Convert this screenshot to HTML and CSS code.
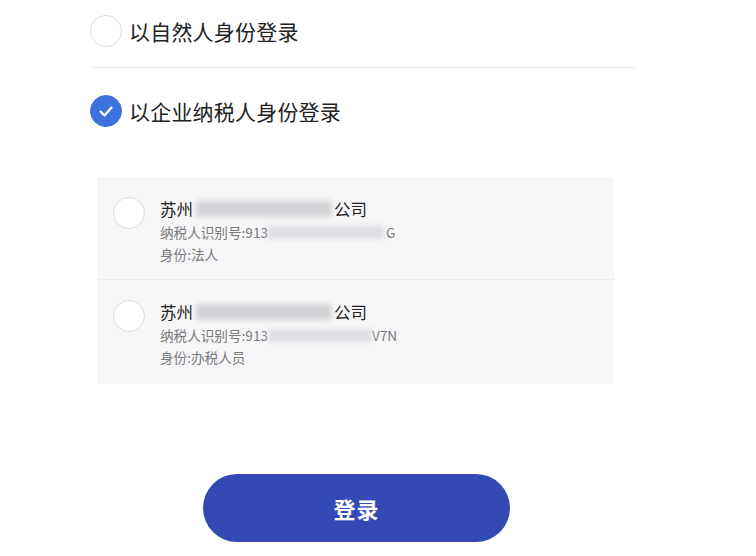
FILE: index.html
```html
<!DOCTYPE html>
<html lang="zh">
<head>
<meta charset="utf-8">
<link rel="stylesheet" href="styles.css">
</head>
<body>
<div class="page">
  <div class="option">
    <span class="radio"></span>
    <span class="option-label">以自然人身份登录</span>
  </div>
  <div class="divider"></div>
  <div class="option option-checked">
    <span class="radio radio-on">
      <svg viewBox="0 0 32 32" width="32" height="32"><path d="M10.5 16.5 L14.5 20.5 L21.5 12.5" fill="none" stroke="#fff" stroke-width="2.2" stroke-linecap="round" stroke-linejoin="round"/></svg>
    </span>
    <span class="option-label">以企业纳税人身份登录</span>
  </div>
  <div class="panel">
    <div class="item">
      <span class="radio"></span>
      <div class="info">
        <div class="name">苏州<span class="mask mask-name"></span>公司</div>
        <div class="sub">纳税人识别号:913<span class="mask mask-id1"></span>G</div>
        <div class="sub sub-last">身份:法人</div>
      </div>
    </div>
    <div class="item item-2">
      <span class="radio"></span>
      <div class="info">
        <div class="name">苏州<span class="mask mask-name"></span>公司</div>
        <div class="sub">纳税人识别号:913<span class="mask mask-id2"></span>V7N</div>
        <div class="sub sub-last">身份:办税人员</div>
      </div>
    </div>
  </div>
  <button class="login">登录</button>
</div>
</body>
</html>
```

FILE: styles.css
```css
html, body {
  margin: 0;
  padding: 0;
  background: #ffffff;
}
body {
  font-family: "Noto Sans CJK SC", "Noto Sans", sans-serif;
  color: #222;
}
.page {
  width: 756px;
  height: 556px;
  padding: 15px 0 0 90px;
  box-sizing: border-box;
  overflow: hidden;
}
.option {
  display: flex;
  align-items: center;
  height: 32px;
}
.option-checked {
  margin-top: 27px;
}
.radio {
  width: 32px;
  height: 32px;
  box-sizing: border-box;
  border: 1.5px solid #dcdcdc;
  border-radius: 50%;
  background: #fff;
  flex: none;
  display: flex;
  align-items: center;
  justify-content: center;
}
.radio-on {
  background: #3d72de;
  border-color: #3d72de;
}
.radio-on svg {
  display: block;
  flex: none;
}
.option-label {
  margin-left: 7px;
  font-size: 21px;
  line-height: 32px;
  color: #222;
  letter-spacing: 0.2px;
}
.divider {
  margin-top: 20px;
  width: 545px;
  height: 1px;
  background: #e8e8ea;
}
.panel {
  margin: 50px 0 0 7px;
  width: 517px;
  background: #f6f6f8;
}
.item {
  display: flex;
  align-items: flex-start;
  padding: 20px 16px 14px;
  border-bottom: 1px solid #ececef;
}
.item-2 {
  border-bottom: none;
  padding: 20px 16px 16px;
}
.info {
  margin-left: 15px;
}
.name {
  font-size: 16.5px;
  line-height: 24px;
  color: #222;
  display: flex;
  align-items: center;
}
.sub {
  font-size: 13.6px;
  line-height: 23px;
  color: #7a7a7a;
  display: flex;
  align-items: center;
}
.sub-last {
  line-height: 21px;
}
.mask {
  display: inline-block;
  background: #d4d4d8;
  filter: blur(2.5px);
  border-radius: 3px;
}
.mask-name {
  width: 136px;
  height: 16px;
  margin: 0 2px 0 3px;
}
.mask-id1 {
  width: 116px;
  height: 13px;
  background: #dedee2;
  margin-right: 2px;
}
.mask-id2 {
  width: 104px;
  height: 13px;
  background: #dedee2;
  margin-right: 0;
}
.login {
  display: block;
  margin: 90px 0 0 113px;
  width: 307px;
  height: 68px;
  border: none;
  border-radius: 34px;
  background: #3349b4;
  color: #fff;
  font-family: "Noto Sans CJK SC", "Noto Sans", sans-serif;
  font-size: 22px;
  font-weight: 700;
  letter-spacing: 1px;
  padding: 0;
}
```
